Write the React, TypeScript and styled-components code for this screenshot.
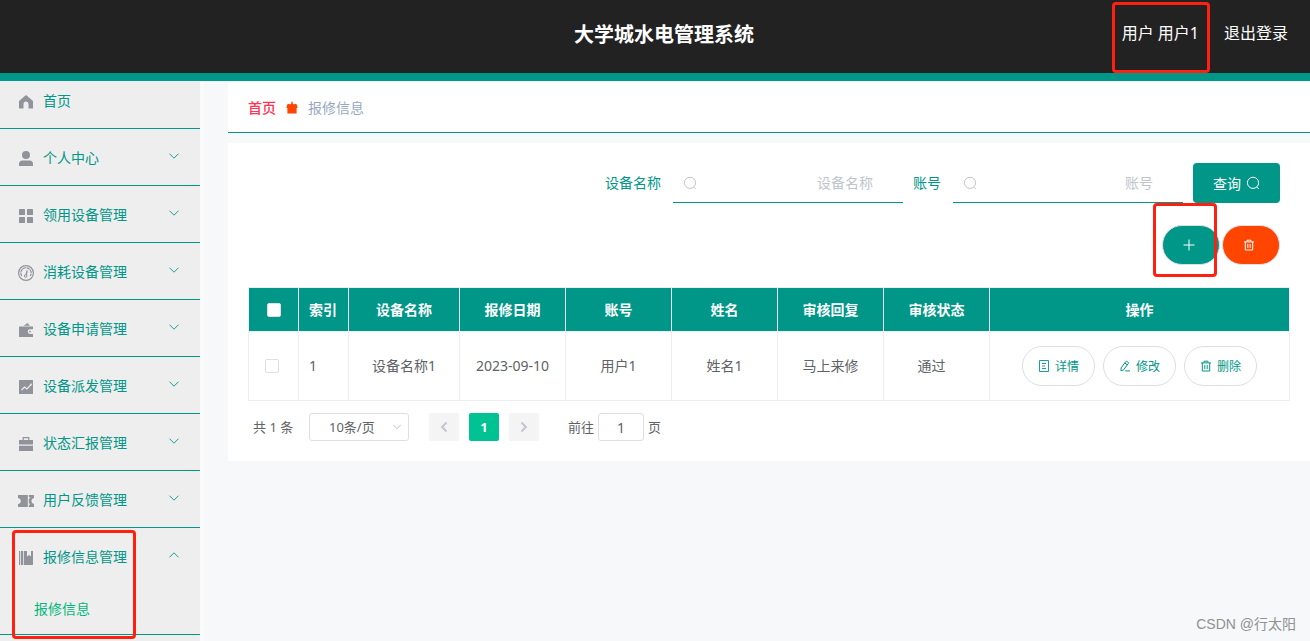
import React from "react";
import styled, { createGlobalStyle } from "styled-components";

const TEAL = "#009688";
const RED = "#ff2012";

const GlobalStyle = createGlobalStyle`
  * { box-sizing: border-box; }
  html, body, #root { height: 100%; }
  body {
    margin: 0;
    overflow: hidden;
    background: #f6f8fa;
    color: #606266;
    font-family: "Noto Sans", "Noto Sans CJK SC", sans-serif;
    font-size: 14px;
    line-height: 20px;
  }
  button, input, select { font-family: inherit; margin: 0; }
  a { color: inherit; text-decoration: none; }
`;

const Page = styled.div`
  position: relative;
  min-height: 100%;
  display: flex;
  flex-direction: column;
`;

const Header = styled.header`
  display: grid;
  grid-template-columns: 1fr auto 1fr;
  align-items: center;
  height: 81px;
  padding: 0 22px 6px 40px;
  background: #222;
  border-bottom: 8px solid ${TEAL};
  color: #fff;
`;

const Title = styled.h1`
  grid-column: 2;
  margin: 0;
  padding-top: 2px;
  font-size: 20px;
  line-height: 28px;
  font-weight: 700;
`;

const UserNav = styled.nav`
  display: flex;
  justify-content: flex-end;
  gap: 25px;
  padding-bottom: 2px;
  font-size: 16px;
  line-height: 24px;
`;

const Marked = styled.div`
  position: relative;
`;

const Mark = styled.span<{ $inset: string }>`
  position: absolute;
  inset: ${(p) => p.$inset};
  border: 3px solid ${RED};
  border-radius: 4px;
  pointer-events: none;
  z-index: 2;
`;

const Body = styled.div`
  display: flex;
  flex: 1;
`;

const Sidebar = styled.aside`
  flex: 0 0 204px;
  background: #eee;
  border-right: 4px solid #fbfbfb;
`;

const MenuGroup = styled.div`
  position: relative;
  border-bottom: 1px solid ${TEAL};
`;

const MenuItem = styled.a<{ $first?: boolean }>`
  display: flex;
  align-items: center;
  gap: 8px;
  height: ${(p) => (p.$first ? 47 : 56)}px;
  padding: ${(p) => (p.$first ? "0 20px 8px 17px" : "2px 20px 0 17px")};
  color: ${TEAL};
`;

const MenuIcon = styled.svg`
  width: 18px;
  height: 18px;
  margin-top: 2px;
  fill: #909399;
`;

const MenuArrow = styled.svg<{ $open?: boolean }>`
  width: 12px;
  height: 12px;
  margin-left: auto;
  margin-bottom: 4px;
  fill: none;
  stroke: ${TEAL};
  transform: ${(p) => (p.$open ? "rotate(180deg)" : "none")};
`;

const SubItem = styled.a`
  display: block;
  height: 50px;
  padding-left: 34px;
  line-height: 50px;
  color: #00b87a;
`;

const Main = styled.main`
  flex: 1;
  min-width: 0;
  padding: 2px 0 0 24px;
`;

const Breadcrumb = styled.nav`
  display: flex;
  align-items: center;
  gap: 9px;
  height: 50px;
  padding: 0 20px;
  background: #fff;
  border-bottom: 1px solid ${TEAL};
  color: #97a8be;
`;

const HomeLink = styled.a`
  color: #ff3355;
  font-weight: 500;
`;

const Panel = styled.section`
  margin-top: 10px;
  padding: 20px 20px 20px;
  background: #fff;
`;

const SearchForm = styled.form`
  display: flex;
  justify-content: flex-end;
  align-items: center;
  gap: 10px;
  padding-right: 10px;
`;

const Field = styled.div`
  display: flex;
  align-items: center;
  gap: 12px;
  color: ${TEAL};
`;

const InputWrap = styled.div`
  display: flex;
  align-items: center;
  width: 230px;
  height: 40px;
  padding: 0 30px 0 10px;
  border-bottom: 1px solid ${TEAL};
  color: #c0c4cc;
`;

const TextInput = styled.input`
  flex: 1;
  min-width: 0;
  height: 38px;
  padding: 0;
  border: 0;
  outline: 0;
  background: none;
  text-align: right;
  font-size: 14px;
  color: #606266;
  &::placeholder { color: #c0c4cc; opacity: 1; }
`;

const QueryButton = styled.button`
  display: flex;
  align-items: center;
  gap: 5px;
  height: 40px;
  padding: 0 20px;
  border: 0;
  border-radius: 4px;
  background: ${TEAL};
  color: #fff;
  font-size: 14px;
`;

const Toolbar = styled.div`
  display: flex;
  justify-content: flex-end;
  gap: 2px;
  padding: 22px 10px 22px 0;
`;

const RoundButton = styled.button<{ $color: string }>`
  display: flex;
  align-items: center;
  width: 58px;
  height: 40px;
  padding: 0 20px;
  border: 1px solid #dcdfe6;
  border-radius: 20px;
  background: ${(p) => p.$color};
  color: #fff;
`;

const Glyph = styled.svg<{ $size: number }>`
  flex: none;
  width: ${(p) => p.$size}px;
  height: ${(p) => p.$size}px;
  fill: none;
  stroke: currentColor;
`;

const Table = styled.table`
  width: 100%;
  table-layout: fixed;
  border-collapse: collapse;
`;

const Th = styled.th<{ $left?: boolean }>`
  height: 44px;
  padding: 0 10px;
  border: 1px solid #ebeef5;
  background: ${TEAL};
  color: #fff;
  font-weight: 700;
  text-align: ${(p) => (p.$left ? "left" : "center")};
  white-space: nowrap;
`;

const Td = styled.td<{ $left?: boolean; $tail?: boolean }>`
  height: 69px;
  padding: 0 ${(p) => (p.$tail ? 20 : 10)}px 0 10px;
  border: 1px solid #ebeef5;
  text-align: ${(p) => (p.$left ? "left" : "center")};
  white-space: nowrap;
`;

const CheckBox = styled.input`
  appearance: none;
  display: block;
  width: 14px;
  height: 14px;
  margin: 0 auto;
  border: 1px solid #dcdfe6;
  border-radius: 2px;
  background: #fff;
`;

const CheckCell = styled.div<{ $head?: boolean }>`
  padding: ${(p) => (p.$head ? "0 0 0 1px" : "0 3px 0 0")};
`;

const Actions = styled.div`
  display: flex;
  justify-content: center;
  gap: 8px;
`;

const ActionButton = styled.button`
  display: flex;
  align-items: center;
  justify-content: center;
  gap: 5px;
  width: 73px;
  height: 40px;
  padding: 0;
  border: 1px solid #dcdfe6;
  border-radius: 20px;
  background: #fff;
  color: ${TEAL};
  font-size: 12px;
`;

const Pagination = styled.div`
  display: flex;
  align-items: center;
  height: 28px;
  margin-top: 12px;
  padding-left: 5px;
  font-size: 13px;
`;

const Total = styled.span`
  width: 56px;
`;

const SizeBox = styled.div`
  position: relative;
  width: 100px;
  margin-right: 20px;
  color: #c0c4cc;
`;

const SizeSelect = styled.select`
  appearance: none;
  display: block;
  width: 100%;
  height: 28px;
  padding: 0 25px 0 19px;
  border: 1px solid #dcdfe6;
  border-radius: 3px;
  background: #fff;
  color: #606266;
  font-size: 13px;
`;

const SizeArrow = styled(Glyph)`
  position: absolute;
  right: 7px;
  top: 9px;
  pointer-events: none;
`;

const PageButton = styled.button<{ $active?: boolean }>`
  display: flex;
  align-items: center;
  justify-content: center;
  width: 30px;
  height: 28px;
  margin-right: 10px;
  padding: 0;
  border: 0;
  border-radius: 2px;
  background: ${(p) => (p.$active ? "#00c292" : "#f4f4f5")};
  color: ${(p) => (p.$active ? "#fff" : "#c0c4cc")};
  font-size: 13px;
  font-weight: 700;
`;

const Jump = styled.label`
  display: flex;
  align-items: center;
  gap: 4px;
  margin-left: 19px;
`;

const JumpInput = styled.input`
  width: 46px;
  height: 28px;
  padding: 0 3px;
  border: 1px solid #dcdfe6;
  border-radius: 3px;
  color: #606266;
  font-size: 14px;
  text-align: center;
`;

const Watermark = styled.div`
  position: absolute;
  right: 14px;
  bottom: 6px;
  color: #8f9194;
  font-family: "Liberation Sans", "Noto Sans CJK SC", sans-serif;
  font-size: 14px;
  line-height: 22px;
`;

const icons: Record<string, React.ReactNode> = {
  home: <path d="M9 2 16 8v7.500h-4.500V11a2.500 2.500 0 0 0-5 0v4.500H2V8z" />,
  user: (
    <>
      <circle cx="9" cy="5" r="4" />
      <path d="M2 16v-2q0-3.500 3.500-3.500h7q3.500 0 3.500 3.500v2z" />
    </>
  ),
  grid: (
    <>
      <rect x="2" y="2" width="6" height="6" rx=".6" />
      <rect x="10" y="2" width="6" height="6" rx=".6" />
      <rect x="2" y="10" width="6" height="6" rx=".6" />
      <rect x="10" y="10" width="6" height="6" rx=".6" />
    </>
  ),
  gauge: (
    <g fill="none" stroke="#909399">
      <circle cx="9" cy="9" r="7.400" strokeWidth="1.200" />
      <path d="M4.800 12A5.200 5.200 0 1 1 13.200 12" strokeWidth="1.200" strokeDasharray="3.500 .5" />
      <circle cx="8.600" cy="12" r="1.300" />
      <path d="M9.200 10.800 10.200 6.500" strokeWidth="1.400" />
    </g>
  ),
  wallet: (
    <>
      <path d="M2 5.500h14v2.800h-3a2.300 2.300 0 0 0 0 4.600h3V16H2z" />
      <path d="M6.500 4.700q2.200-1 3.800-2.700l2.700 2.700z" />
      <circle cx="13" cy="10.600" r=".9" />
    </>
  ),
  chart: (
    <>
      <rect x="2" y="2" width="14" height="14" rx=".5" />
      <path d="m4.500 12 3-3 2.500 2 4-4.300" fill="none" stroke="#eee" strokeWidth="1.200" />
      <circle cx="14" cy="6.500" r=".9" fill="#eee" />
    </>
  ),
  briefcase: (
    <>
      <path d="M2 10.800h14V16H2zM2 5h14v4.500H2z" />
      <path d="M6.200 5V2.600h5.600V5" fill="none" stroke="#909399" strokeWidth="1.200" />
    </>
  ),
  ticket: (
    <>
      <path d="M1 3h9.800v12H1v-3q2.800-.5 2.800-3T1 6z" />
      <path d="M11.800 3H17v3q-2.600.6-2.600 3t2.600 3v3h-5.200v-2h1v-1.500h-1v-5h1V5h-1z" />
    </>
  ),
  book: <path d="M2 2h1.200v14H2zM4 2h2.200v14H4zM7 2h3v5.500l2-1.500 2 1.500V2h2v14H7z" />,
};

const menu = [
  ["user", "个人中心"],
  ["grid", "领用设备管理"],
  ["gauge", "消耗设备管理"],
  ["wallet", "设备申请管理"],
  ["chart", "设备派发管理"],
  ["briefcase", "状态汇报管理"],
  ["ticket", "用户反馈管理"],
];

const NavIcon = ({ name }: { name: string }) => (
  <MenuIcon viewBox="0 0 18 18" aria-hidden="true">{icons[name]}</MenuIcon>
);

const Arrow = ({ open }: { open?: boolean }) => (
  <MenuArrow $open={open} viewBox="0 0 12 12" aria-hidden="true">
    <path d="m1.500 3.700 4.500 4.500 4.500-4.500" strokeWidth=".9" />
  </MenuArrow>
);

const SearchIcon = () => (
  <Glyph $size={14} viewBox="0 0 14 14" aria-hidden="true">
    <circle cx="7" cy="6.800" r="5.600" />
    <path d="m10.800 11 2 2" />
  </Glyph>
);

const TrashIcon = () => (
  <Glyph $size={12} viewBox="0 0 12 12" aria-hidden="true">
    <path d="M1 2.900h10M4 2.700V1.200h4v1.500M2.300 3v8h7.400V3M4.800 5v4M7.200 5v4" />
  </Glyph>
);

const DetailIcon = () => (
  <Glyph $size={12} viewBox="0 0 12 12" aria-hidden="true">
    <path d="M1.500.5h9v11h-9zM4 3.500h4M4 6h3M4 8.500h4" strokeWidth=".9" />
  </Glyph>
);

const EditIcon = () => (
  <Glyph $size={12} viewBox="0 0 12 12" aria-hidden="true">
    <path d="M6.600 1.800q.7-.9 1.600-.3l.7.5q.9.700.3 1.600L4.700 9.800 2 10.900l.1-3zM5.800 3l2.500 1.800M6.200 10.900H11" />
  </Glyph>
);

const columns = ["设备名称", "报修日期", "账号", "姓名", "审核回复", "审核状态"];
const record = ["设备名称1", "2023-09-10", "用户1", "姓名1", "马上来修", "通过"];
const widths = [50, 50, 111, 106, 106, 106, 106, 106, 300];

export default function App() {
  return (
    <Page>
      <GlobalStyle />
      <Header>
        <Title>大学城水电管理系统</Title>
        <UserNav>
          <Marked>
            <a href="#user">用户 用户1</a>
            <Mark $inset="-19px -11px -28px -10px" />
          </Marked>
          <a href="#logout">退出登录</a>
        </UserNav>
      </Header>
      <Body>
        <Sidebar>
          <MenuGroup>
            <MenuItem $first href="#home"><NavIcon name="home" />首页</MenuItem>
          </MenuGroup>
          {menu.map(([icon, label]) => (
            <MenuGroup key={label}>
              <MenuItem href={"#" + icon}><NavIcon name={icon} />{label}<Arrow /></MenuItem>
            </MenuGroup>
          ))}
          <MenuGroup>
            <MenuItem href="#repair"><NavIcon name="book" />报修信息管理<Arrow open /></MenuItem>
            <SubItem href="#repair-info">报修信息</SubItem>
            <Mark $inset="2px 64px -5px 12px" />
          </MenuGroup>
        </Sidebar>
        <Main>
          <Breadcrumb>
            <HomeLink href="#home">首页</HomeLink>
            <Glyph $size={14} viewBox="0 0 14 14" aria-hidden="true">
              <path d="M6.300.8h1.400v1.700L9 3.500l1.500-.7 1.500.9.500 3.300h-.9v5.500H2.400V7h-.9L2 3.700l1.500-.9 1.500.7 1.300-1z" fill="#ff4500" stroke="none" />
            </Glyph>
            <span>报修信息</span>
          </Breadcrumb>
          <Panel>
            <SearchForm>
              <Field>
                <label htmlFor="device">设备名称</label>
                <InputWrap><SearchIcon /><TextInput id="device" placeholder="设备名称" /></InputWrap>
              </Field>
              <Field>
                <label htmlFor="account">账号</label>
                <InputWrap><SearchIcon /><TextInput id="account" placeholder="账号" /></InputWrap>
              </Field>
              <QueryButton type="button">查询<SearchIcon /></QueryButton>
            </SearchForm>
            <Toolbar>
              <Marked>
                <RoundButton $color={TEAL} aria-label="新增">
                  <Glyph $size={12} viewBox="0 0 12 12" aria-hidden="true"><path d="M6 .5v11M.5 6h11" /></Glyph>
                </RoundButton>
                <Mark $inset="-22px 3px -12px -9px" />
              </Marked>
              <RoundButton $color="#ff4500" aria-label="删除"><TrashIcon /></RoundButton>
            </Toolbar>
            <Table>
              <colgroup>{widths.map((w, i) => <col key={i} width={w} />)}</colgroup>
              <thead>
                <tr>
                  <Th><CheckCell $head><CheckBox type="checkbox" aria-label="全选" /></CheckCell></Th>
                  <Th $left>索引</Th>
                  {columns.map((c) => <Th key={c}>{c}</Th>)}
                  <Th>操作</Th>
                </tr>
              </thead>
              <tbody>
                <tr>
                  <Td><CheckCell><CheckBox type="checkbox" aria-label="选择" /></CheckCell></Td>
                  <Td $left>1</Td>
                  {record.map((c, i) => <Td key={c} $tail={i === record.length - 1}>{c}</Td>)}
                  <Td>
                    <Actions>
                      <ActionButton><DetailIcon />详情</ActionButton>
                      <ActionButton><EditIcon />修改</ActionButton>
                      <ActionButton><TrashIcon />删除</ActionButton>
                    </Actions>
                  </Td>
                </tr>
              </tbody>
            </Table>
            <Pagination>
              <Total>共 1 条</Total>
              <SizeBox>
                <SizeSelect aria-label="每页条数"><option>10条/页</option></SizeSelect>
                <SizeArrow $size={10} viewBox="0 0 12 12" aria-hidden="true"><path d="m1.500 3.500 4.500 4.500 4.500-4.500" strokeWidth="1.200" /></SizeArrow>
              </SizeBox>
              <PageButton aria-label="上一页">
                <Glyph $size={12} viewBox="0 0 12 12"><path d="M8.500 1.500 4 6l4.500 4.500" strokeWidth="1.800" /></Glyph>
              </PageButton>
              <PageButton $active>1</PageButton>
              <PageButton aria-label="下一页">
                <Glyph $size={12} viewBox="0 0 12 12"><path d="M3.500 1.500 8 6l-4.500 4.500" strokeWidth="1.800" /></Glyph>
              </PageButton>
              <Jump>前往<JumpInput defaultValue="1" />页</Jump>
            </Pagination>
          </Panel>
        </Main>
      </Body>
      <Watermark>CSDN @行太阳</Watermark>
    </Page>
  );
}
